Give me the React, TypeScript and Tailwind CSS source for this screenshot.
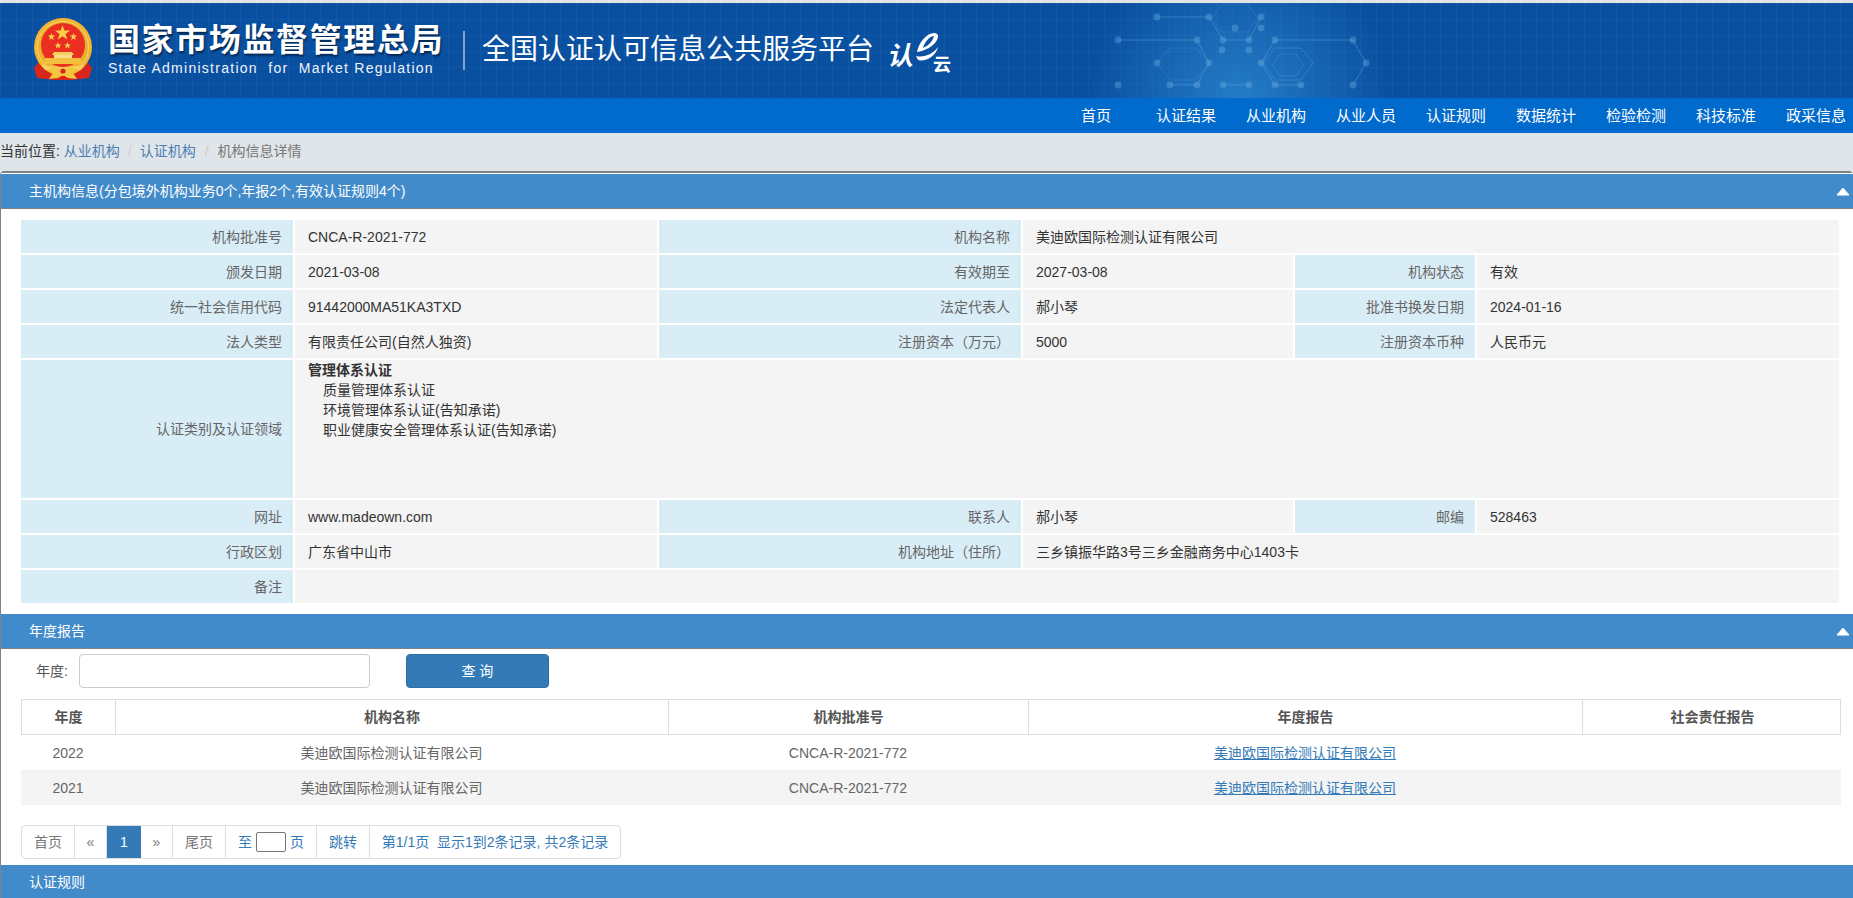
import React from 'react'

const cjk = "font-['Liberation_Sans','Noto_Sans_CJK_SC',sans-serif]"

const navItems = ['首页', '认证结果', '从业机构', '从业人员', '认证规则', '数据统计', '检验检测', '科技标准', '政采信息']

const nodes = [
  [1157, 17], [1209, 17], [1261, 17], [1118, 40], [1197, 40], [1223, 40], [1249, 40], [1275, 40], [1353, 40],
  [1157, 63], [1209, 63], [1261, 63], [1366, 63], [1118, 85], [1170, 85], [1197, 85], [1223, 85], [1249, 85],
  [1275, 85], [1301, 85], [1353, 85], [1235, 28], [1261, 28], [1249, 50], [1222, 50],
]

const links = [
  [1157, 17, 1209, 17], [1209, 17, 1223, 40], [1223, 40, 1249, 40], [1249, 40, 1261, 17], [1118, 40, 1197, 40],
  [1197, 40, 1209, 63], [1209, 63, 1197, 85], [1197, 85, 1170, 85], [1275, 40, 1353, 40], [1275, 40, 1261, 63],
  [1261, 63, 1275, 85], [1275, 85, 1301, 85], [1223, 85, 1249, 85], [1353, 40, 1366, 63], [1366, 63, 1353, 85],
]

const HeaderArt = () => (
  <svg className="absolute inset-0 h-full w-full" viewBox="0 3 1853 95" preserveAspectRatio="none">
    <defs>
      <radialGradient id="glow" gradientUnits="userSpaceOnUse" cx="1240" cy="98" r="150">
        <stop offset="0" stopColor="#2f8fd6" stopOpacity="0.7" />
        <stop offset="1" stopColor="#2f8fd6" stopOpacity="0" />
      </radialGradient>
    </defs>
    <rect x="1000" y="3" width="500" height="95" fill="url(#glow)" />
    {links.map(([a, b, c, d], i) => (
      <line key={i} x1={a} y1={b} x2={c} y2={d} stroke="#6fb0e2" strokeOpacity="0.4" strokeWidth="1" />
    ))}
    {nodes.map(([x, y], i) => (
      <circle key={i} cx={x} cy={y} r="3.4" fill="#6fb0e2" fillOpacity="0.38" />
    ))}
    <polygon points="1170,48 1196,48 1209,63 1196,80 1170,80 1157,63" fill="none" stroke="#6fb0e2" strokeOpacity="0.2" />
    <polygon points="1275,48 1301,48 1313,63 1301,80 1275,80 1263,63" fill="none" stroke="#6fb0e2" strokeOpacity="0.3" />
    <polygon points="1280,54 1296,54 1304,65 1296,76 1280,76 1272,65" fill="none" stroke="#6fb0e2" strokeOpacity="0.25" />
    <polygon points="1222,5 1248,5 1258,18 1248,32 1222,32 1212,18" fill="none" stroke="#6fb0e2" strokeOpacity="0.2" />
  </svg>
)

const Emblem = () => (
  <svg width="60" height="64" viewBox="0 0 60 64" className="shrink-0 -translate-y-[1px]">
    <path d="M6 44 L1 50 L4 60 L22 62 L38 62 L56 60 L59 50 L54 44 Z" fill="#d8261c" />
    <circle cx="30" cy="29" r="29" fill="#f2b632" />
    <circle cx="30" cy="29" r="25.5" fill="#e9b02d" stroke="#f9d766" strokeWidth="1" />
    <circle cx="30" cy="27" r="22" fill="#ea2e22" />
    <polygon points="29.5,7 31.4,12.6 37.2,12.6 32.5,16 34.3,21.5 29.5,18.2 24.8,21.5 26.6,16 21.9,12.6 27.7,12.6" fill="#f8d146" />
    <polygon points="18.5,15 19.5,17.6 22.2,17.6 20,19.3 20.8,22 18.5,20.4 16.2,22 17,19.3 14.8,17.6 17.5,17.6" fill="#f8d146" />
    <polygon points="40.5,15 41.5,17.6 44.2,17.6 42,19.3 42.8,22 40.5,20.4 38.2,22 39,19.3 36.8,17.6 39.5,17.6" fill="#f8d146" />
    <polygon points="25,24 26,26.4 28.6,26.4 26.5,28 27.3,30.6 25,29 22.7,30.6 23.5,28 21.4,26.4 24,26.4" fill="#f8d146" />
    <polygon points="34.5,24 35.5,26.4 38,26.4 36,28 36.8,30.6 34.5,29 32.2,30.6 33,28 31,26.4 33.5,26.4" fill="#f8d146" />
    <path d="M21 34 H39 L41 37 H19 Z" fill="#f6cf5e" />
    <rect x="21" y="37" width="18" height="3" fill="#fae08a" />
    <path d="M13 40 H47 L50 46 H10 Z" fill="#f3bf3f" />
    <path d="M8 46 C18 50 42 50 52 46 L48 52 H12 Z" fill="#f6cf5e" />
    <path d="M15 51 L25 49 L30 53 L35 49 L45 51 L40 55 L44 61 L35 60 L30 57 L25 60 L16 61 L20 55 Z" fill="#f4c53f" />
    <circle cx="30" cy="53" r="2.6" fill="#d8261c" />
  </svg>
)

const CloudLogo = () => (
  <div className="relative ml-[15px] h-[50px] w-[66px] shrink-0 text-white">
    <span className={`absolute left-0 top-[16px] -skew-x-12 text-[26px] font-bold leading-[28px] ${cjk}`}>认</span>
    <svg className="absolute left-[22px] top-0" width="44" height="40" viewBox="0 0 44 40">
      <path d="M6 26 C8 16 16 7 23 7 C27 7 28 10 26 14 C23 20 14 25 6 26 Z M12 22 C17 20 22 15 23 10 C19 10 14 15 12 22 Z" fill="#fff" fillRule="evenodd" />
      <path d="M5 30 C13 32 22 28 27 21 C25 30 15 36 7 34 Z" fill="#fff" />
    </svg>
    <span className={`absolute left-[44px] top-[30px] text-[18px] font-bold leading-[18px] ${cjk}`}>云</span>
  </div>
)

const Triangle = () => (
  <svg width="14" height="9" viewBox="0 0 14 9" className="shrink-0">
    <path d="M7 1 L13 8 H1 Z" fill="#fff" stroke="#fff" strokeLinejoin="round" />
  </svg>
)

const PanelHeading: React.FC<{ title: string; arrow?: boolean; className?: string }> = ({ title, arrow = true, className = '' }) => (
  <div className={`flex items-center justify-between bg-[#428bca] pl-[28px] pr-[3px] text-white ${className}`}>
    <span>{title}</span>
    {arrow && <Triangle />}
  </div>
)

const Label: React.FC<{ children?: React.ReactNode }> = ({ children }) => (
  <div className="flex items-center justify-end bg-[#d9edf7] pr-[11px] text-[#666]">{children}</div>
)

const Value: React.FC<{ children?: React.ReactNode; className?: string }> = ({ children, className = '' }) => (
  <div className={`flex items-center bg-[#f4f4f4] pl-[13px] text-[#333] ${className}`}>{children}</div>
)

const yearColumns = 'grid grid-cols-[94px_553px_360px_554px_259px]'

const reports = [
  { year: '2022', stripe: false },
  { year: '2021', stripe: true },
]

const pagerCell = 'flex items-center justify-center border-r border-[#ddd]'

export default function App() {
  return (
    <div className={`h-screen w-full overflow-hidden bg-white text-[14px] leading-[20px] ${cjk}`}>
      <div className="h-[3px] bg-[#e3e4e6]" />

      <header className="relative flex h-[95px] items-center bg-[#0a50a1] bg-[linear-gradient(rgba(120,180,235,0.07)_1px,transparent_1px),linear-gradient(90deg,rgba(120,180,235,0.07)_1px,transparent_1px)] bg-size-[16px_16px] pl-[33px]">
        <HeaderArt />
        <div className="relative flex items-center">
          <Emblem />
          <div className="ml-[15px] w-[340px] -translate-y-[2px] text-white">
            <div className="text-[32px] font-bold leading-[40px] tracking-[1.6px] [text-shadow:1px_2px_2px_#04264f]">国家市场监督管理总局</div>
            <div className="-mt-[1px] whitespace-pre text-[14px] leading-[18px] tracking-[1.27px] text-[#eef4fb]">State Administration  for  Market Regulation</div>
          </div>
          <div className="ml-[15px] h-[39px] w-[2px] bg-[#7fa6d2]" />
          <div className="ml-[17px] -translate-y-[1px] text-[28px] leading-[36px] text-white">全国认证认可信息公共服务平台</div>
          <CloudLogo />
        </div>
      </header>

      <nav className="flex h-[35px] items-center justify-end gap-[30px] bg-[#006acd] pr-[7px] text-[15px] text-white">
        {navItems.map((item) => (
          <a key={item} className="w-[60px] whitespace-nowrap text-center">{item}</a>
        ))}
      </nav>

      <div className="flex h-[38px] items-center whitespace-pre bg-[#e0e5e9] pb-[2px] text-[#777]">
        <span className="text-[#333]">当前位置: </span>
        <a className="text-[#4a7fb5]">从业机构</a>
        <span className="px-[8px] text-[#ccc]">/</span>
        <a className="text-[#4a7fb5]">认证机构</a>
        <span className="px-[9px] text-[#ccc]">/</span>
        <span>机构信息详情</span>
      </div>

      <section className="rounded-t-[4px] border-l-[1.5px] border-t-2 border-[#7f8285]">
        <div className="border-t border-white">
          <PanelHeading className="h-[35px] border-b border-[#7f8285]" title="主机构信息(分包境外机构业务0个,年报2个,有效认证规则4个)" />
        </div>

        <div className="grid grid-cols-[272px_362px_362px_270px_180px_362px] grid-rows-[33px_33px_33px_33px_138px_33px_33px_33px] gap-[2px] pl-[20px] pt-[11px]">
          <Label>机构批准号</Label>
          <Value>CNCA-R-2021-772</Value>
          <Label>机构名称</Label>
          <Value className="col-span-3">美迪欧国际检测认证有限公司</Value>

          <Label>颁发日期</Label>
          <Value>2021-03-08</Value>
          <Label>有效期至</Label>
          <Value>2027-03-08</Value>
          <Label>机构状态</Label>
          <Value>有效</Value>

          <Label>统一社会信用代码</Label>
          <Value>91442000MA51KA3TXD</Value>
          <Label>法定代表人</Label>
          <Value>郝小琴</Value>
          <Label>批准书换发日期</Label>
          <Value>2024-01-16</Value>

          <Label>法人类型</Label>
          <Value>有限责任公司(自然人独资)</Value>
          <Label>注册资本（万元）</Label>
          <Value>5000</Value>
          <Label>注册资本币种</Label>
          <Value>人民币元</Value>

          <Label>认证类别及认证领域</Label>
          <div className="col-span-5 bg-[#f4f4f4] pl-[13px] text-[#333]">
            <div className="font-bold">管理体系认证</div>
            <div className="pl-[15px]">质量管理体系认证</div>
            <div className="pl-[15px]">环境管理体系认证(告知承诺)</div>
            <div className="pl-[15px]">职业健康安全管理体系认证(告知承诺)</div>
          </div>

          <Label>网址</Label>
          <Value>www.madeown.com</Value>
          <Label>联系人</Label>
          <Value>郝小琴</Value>
          <Label>邮编</Label>
          <Value>528463</Value>

          <Label>行政区划</Label>
          <Value>广东省中山市</Value>
          <Label>机构地址（住所）</Label>
          <Value className="col-span-3">三乡镇振华路3号三乡金融商务中心1403卡</Value>

          <Label>备注</Label>
          <Value className="col-span-5" />
        </div>

        <PanelHeading className="mt-[11px] h-[35px] border-b border-[#7f8285]" title="年度报告" />

        <div className="flex h-[50px] items-start pl-[35px] pt-[5px]">
          <span className="leading-[34px] text-[#555]">年度:</span>
          <input className="ml-[11px] h-[34px] w-[291px] rounded-[4px] border border-[#ccc] bg-white" />
          <button className="ml-[36px] h-[34px] w-[143px] rounded-[4px] border border-[#2e6da4] bg-[#337ab7] text-white">查 询</button>
        </div>

        <div className="ml-[20px] w-[1820px]">
          <div className={`${yearColumns} h-[36px] border border-[#ddd] text-center font-bold text-[#555]`}>
            {['年度', '机构名称', '机构批准号', '年度报告', '社会责任报告'].map((head, i) => (
              <div key={head} className={`flex items-center justify-center ${i < 4 ? 'border-r border-[#ddd]' : ''}`}>{head}</div>
            ))}
          </div>
          {reports.map((row) => (
            <div key={row.year} className={`${yearColumns} h-[35px] items-center text-center text-[#666] ${row.stripe ? 'bg-[#f4f4f4]' : ''}`}>
              <div>{row.year}</div>
              <div>美迪欧国际检测认证有限公司</div>
              <div>CNCA-R-2021-772</div>
              <a className="text-[#337ab7] underline">美迪欧国际检测认证有限公司</a>
              <div />
            </div>
          ))}

          <div className="mt-[20px] grid h-[34px] w-[600px] grid-cols-[53px_32px_34px_32px_53px_91px_53px_1fr] rounded-[4px] border border-[#ddd] text-[#337ab7]">
            <div className={`${pagerCell} text-[#777]`}>首页</div>
            <div className={`${pagerCell} text-[#777]`}>«</div>
            <div className="flex items-center justify-center bg-[#337ab7] text-white">1</div>
            <div className={`${pagerCell} text-[#777]`}>»</div>
            <div className={`${pagerCell} text-[#777]`}>尾页</div>
            <div className={pagerCell}>
              至
              <input className="mx-[4px] h-[20px] w-[30px] rounded-[2px] border border-[#767676] bg-white" />
              页
            </div>
            <div className={pagerCell}>跳转</div>
            <div className="flex items-center justify-center whitespace-pre">第1/1页  显示1到2条记录, 共2条记录</div>
          </div>
        </div>

        <PanelHeading className="mt-[6px] h-[40px] pb-[7px]" arrow={false} title="认证规则" />
      </section>
    </div>
  )
}
